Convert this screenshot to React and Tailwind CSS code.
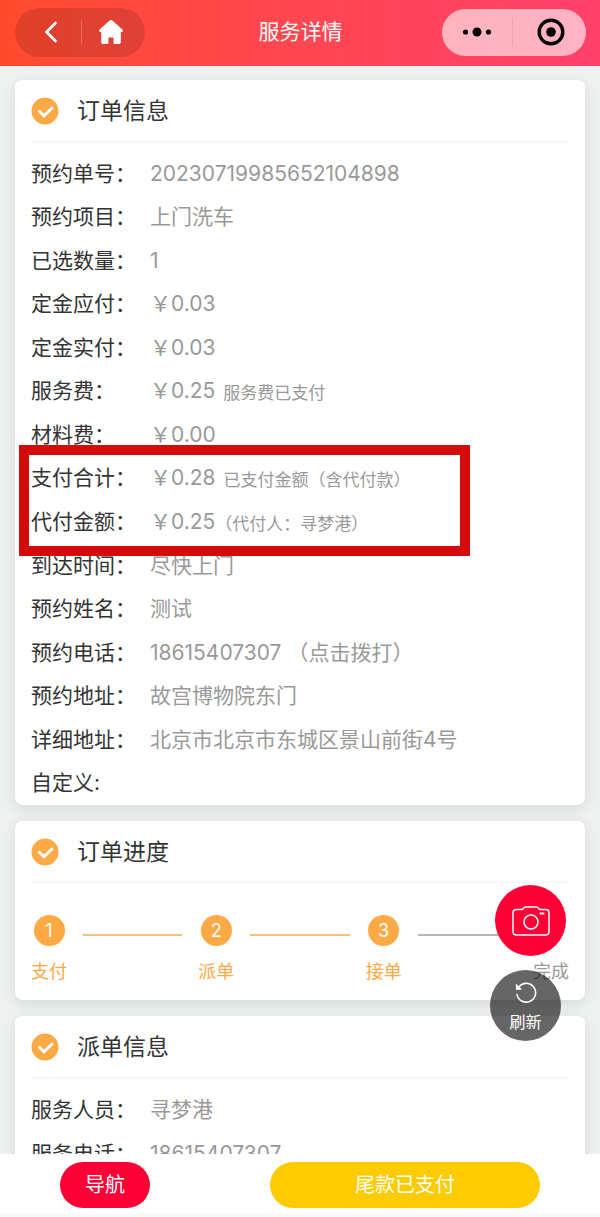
const orderRows = [
  { label: '预约单号：', value: '20230719985652104898' },
  { label: '预约项目：', value: '上门洗车' },
  { label: '已选数量：', value: '1' },
  { label: '定金应付：', value: '￥0.03' },
  { label: '定金实付：', value: '￥0.03' },
  { label: '服务费：', value: '￥0.25', note: '服务费已支付' },
  { label: '材料费：', value: '￥0.00' },
  { label: '支付合计：', value: '￥0.28', note: '已支付金额（含代付款）' },
  { label: '代付金额：', value: '￥0.25', note: '（代付人：寻梦港）' },
  { label: '到达时间：', value: '尽快上门' },
  { label: '预约姓名：', value: '测试' },
  { label: '预约电话：', value: '18615407307 （点击拨打）', href: 'tel:18615407307' },
  { label: '预约地址：', value: '故宫博物院东门' },
  { label: '详细地址：', value: '北京市北京市东城区景山前街4号' },
  { label: '自定义:', value: '' }
];

const dispatchRows = [
  { label: '服务人员：', value: '寻梦港' },
  { label: '服务电话：', value: '18615407307', href: 'tel:18615407307' }
];

const steps = [
  { label: '支付', done: true },
  { label: '派单', done: true },
  { label: '接单', done: true },
  { label: '完成', done: false }
];

const Header = () => (
  <header className="grid h-[66px] shrink-0 grid-cols-[1fr_auto_1fr] items-center bg-linear-to-r from-[#ff4b2b] to-[#ff416c] pr-3.5 pb-0.5 pl-[15px] text-white">
    <div className="flex h-[49px] w-[130px] items-center rounded-full bg-black/12">
      <button type="button" aria-label="返回" className="flex flex-1 justify-center pl-1.5">
        <svg width="14" height="22" viewBox="0 0 14 22" fill="none" stroke="currentColor" strokeWidth="2.8" strokeLinecap="round" strokeLinejoin="round">
          <path d="M11.500 2 2.500 11l9 9" />
        </svg>
      </button>
      <span className="h-6 w-px bg-white/25" />
      <button type="button" aria-label="首页" className="flex flex-1 justify-center pr-1">
        <svg width="26" height="26" viewBox="0 0 26 26" fill="currentColor">
          <path d="M11.6 1.6a2.1 2.1 0 0 1 2.8 0l10 9c1 .9.6 2.4-.8 2.4h-.8v10.2c0 1.1-.8 1.8-1.800 1.800h-5.400v-5.400c0-.8-.4-1.200-1.200-1.200h-2.800c-.8 0-1.200.4-1.200 1.200V25H5c-1 0-1.800-.7-1.800-1.800V13h-.8C1 13 .6 11.500 1.600 10.600z" />
        </svg>
      </button>
    </div>
    <h1 className="text-[21px] leading-7">服务详情</h1>
    <div className="flex h-[47px] w-36 items-center justify-self-end rounded-full bg-white/60 text-black">
      <button type="button" aria-label="更多" className="flex flex-1 justify-center">
        <svg width="30" height="10" viewBox="0 0 30 10" fill="currentColor">
          <circle cx="3.500" cy="5" r="2.600" />
          <circle cx="15" cy="5" r="4.500" />
          <circle cx="26.500" cy="5" r="2.600" />
        </svg>
      </button>
      <span className="h-7 w-px bg-black/8" />
      <button type="button" aria-label="关闭" className="flex flex-1 justify-center pl-1">
        <svg width="28" height="28" viewBox="0 0 28 28">
          <circle cx="14" cy="14" r="11.800" fill="none" stroke="currentColor" strokeWidth="3.400" />
          <circle cx="14" cy="14" r="4.800" fill="currentColor" />
        </svg>
      </button>
    </div>
  </header>
);

const Card = ({ title, children }) => (
  <section className="rounded-lg bg-white px-4 shadow-[0_4px_14px_rgba(0,0,0,0.1)]">
    <div className="flex h-[62px] items-center gap-[18px] border-b border-[#f3f5f5]">
      <svg width="28" height="28" viewBox="0 0 28 28">
        <circle cx="14" cy="14" r="13.500" fill="#fda945" />
        <path d="m7.500 13.500 5.500 5.200 8.800-8.500" fill="none" stroke="#fff" strokeWidth="2.900" />
      </svg>
      <h2 className="text-[23px] leading-8">{title}</h2>
    </div>
    {children}
  </section>
);

// a full-width bracket already brings its own space on the left
const InfoRow = ({ label, value, note, href }) => (
  <div className="flex items-center">
    <dt className="w-[119px] shrink-0">{label}</dt>
    <dd className={`flex items-end text-[#999] ${note?.startsWith('（') ? 'gap-0' : 'gap-2'}`}>
      {href ? <a href={href}>{value}</a> : <span>{value}</span>}
      {note && <span className="text-[17px] leading-6">{note}</span>}
    </dd>
  </div>
);

const Steps = () => (
  <ol className="flex pt-8 pb-4">
    {steps.map((step, i) => (
      <li key={step.label} className={i < steps.length - 1 ? 'flex flex-1' : 'flex'}>
        <div className={`flex flex-col items-center gap-3.5 text-lg leading-6 ${step.done ? 'text-[#fda945]' : 'text-[#999]'}`}>
          <span className={`flex size-[31px] items-center justify-center rounded-full ${step.done ? 'bg-[#fda945] text-white' : ''}`}>
            {i + 1}
          </span>
          <span className="whitespace-nowrap">{step.label}</span>
        </div>
        {i < steps.length - 1 && (
          <span className={`mx-4 mt-[19px] h-0.5 flex-1 ${steps[i + 1].done ? 'bg-[#f0c47c]' : 'bg-[#b8b8b8]'}`} />
        )}
      </li>
    ))}
  </ol>
);

const FloatingActions = () => (
  <>
    <button type="button" aria-label="拍照" className="absolute right-[34px] bottom-[261px] flex size-[71px] items-center justify-center rounded-full bg-[#fe0035] text-white">
      <svg width="38" height="30" viewBox="0 0 38 30" fill="none" stroke="currentColor" strokeWidth="1.500" strokeLinejoin="round" strokeLinecap="round">
        <path d="M4.500 3.500h5.300c.8 0 1-.3 1.500-1C11.800 1.500 12.400 1 13.500 1h11c1.100 0 1.700.5 2.200 1.500.5.700.7 1 1.500 1h5.300c2 0 3.500 1.300 3.500 3.300v18.700c0 2-1.500 3.500-3.500 3.500h-29c-2 0-3.500-1.500-3.500-3.500V6.800c0-2 1.500-3.300 3.500-3.300z" />
        <circle cx="19" cy="16" r="7" />
        <path d="M28.500 7.500h3" strokeWidth="2" />
      </svg>
    </button>
    <button type="button" className="absolute right-[39px] bottom-44 flex size-[71px] flex-col items-center justify-center gap-1.5 rounded-full bg-black/60 pt-1 text-base leading-6 text-white">
      <svg width="22" height="22" viewBox="0 0 22 22" fill="none" stroke="currentColor" strokeWidth="1.600">
        <path d="M3.200 5.800A9.400 9.400 0 1 1 1.900 12" />
        <path d="M.8 1.500 1 8l6-.6z" fill="currentColor" stroke="none" />
      </svg>
      刷新
    </button>
  </>
);

export default function App() {
  return (
    <div className="relative flex h-screen flex-col overflow-hidden bg-[#eff1f1] font-['Inter','Noto_Sans_CJK_SC',sans-serif] text-[#333]">
      <Header />

      <main className="flex min-h-0 flex-1 flex-col gap-4 overflow-y-auto px-[15px] py-3.5 [scrollbar-width:none] *:shrink-0">
        <Card title="订单信息">
          <dl className="relative mt-2.5 grid min-h-[653px] auto-rows-fr text-[21px] leading-7">
            {orderRows.map((row) => (
              <InfoRow key={row.label} {...row} />
            ))}
            {/* marks the totals paid on behalf of the customer */}
            <div className="pointer-events-none absolute top-[293px] -left-3 h-[111px] w-[451px] border-[10px] border-[#d40b0b]" />
          </dl>
        </Card>

        <Card title="订单进度">
          <Steps />
        </Card>

        <Card title="派单信息">
          <dl className="mt-2.5 grid min-h-[88px] auto-rows-fr text-[21px] leading-7">
            {dispatchRows.map((row) => (
              <InfoRow key={row.label} {...row} />
            ))}
          </dl>
        </Card>
      </main>

      <footer className="flex shrink-0 gap-[120px] border-b-3 border-[#f8f8f8] bg-white px-[60px] pt-2 pb-1.5 text-xl text-white">
        <button type="button" className="h-[46px] w-[90px] shrink-0 rounded-full bg-[#fe0035]">导航</button>
        <button type="button" className="h-[46px] flex-1 rounded-full bg-[#fecb00]">尾款已支付</button>
      </footer>

      <FloatingActions />
    </div>
  );
}
